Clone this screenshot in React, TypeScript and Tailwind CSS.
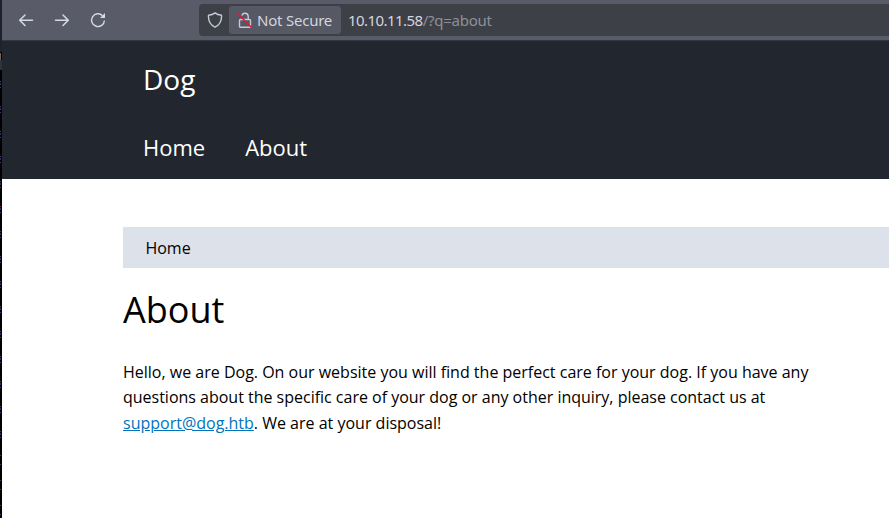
const marks = [82, 107, 132, 157, 182, 207, 232, 257, 282, 307, 332, 357, 382, 407, 432];
const faintMarks = [455, 464, 480, 489, 505, 514];

function TerminalEdge() {
  return (
    <svg width="2" height="518" className="block shrink-0 bg-black" shapeRendering="crispEdges">
      <rect width="2" height="52" fill="#20222b" />
      <rect y="53" width="1" height="7" fill="#756050" />
      <rect y="60" width="2" height="10" fill="#30323f" />
      {marks.map((y) => (
        <g key={y}>
          <rect y={y - 1} width="1" height="1" fill="#693347" />
          <rect y={y + 1} width="1" height="2" fill="#203775" />
          <rect y={y + 5} width="1" height="1" fill="#51366c" />
        </g>
      ))}
      {faintMarks.map((y) => (
        <rect key={y} y={y} width="1" height="1" fill="#51366c" />
      ))}
    </svg>
  );
}

function Toolbar() {
  return (
    <div className="flex h-10 items-center bg-[#5a5b68] pl-4 font-['Noto_Sans',sans-serif] text-[15px] text-[#d3d5de]">
      <div className="flex gap-5">
        <svg width="16" height="16" viewBox="0 0 16 16" fill="none" stroke="#d3dae3" strokeWidth="1.5" strokeLinecap="round" strokeLinejoin="round">
          <path d="M14.5 8.3H1.7M7 3L1.7 8.3L7 13.5" />
        </svg>
        <svg width="16" height="16" viewBox="0 0 16 16" fill="none" stroke="#d3dae3" strokeWidth="1.5" strokeLinecap="round" strokeLinejoin="round">
          <path d="M1.5 8.3H14.3M9 3L14.3 8.3L9 13.5" />
        </svg>
        <svg width="16" height="16" viewBox="0 0 16 16" fill="none" stroke="#d3dae3" strokeWidth="1.4">
          <path d="M12.6 3.7A6.4 6.4 0 1 0 14.4 8.5" />
          <path d="M15 1V6H10Z" fill="#d3dae3" stroke="none" />
        </svg>
      </div>
      <div className="ml-[93px] flex h-8 flex-1 items-center rounded-l bg-[#3e4047] pl-2">
        <svg width="16" height="16" viewBox="0 0 16 16" fill="none" stroke="#c4cad4" strokeWidth="1.4" strokeLinejoin="round">
          <path d="M8 .9C6.3 2.3 4 3 1.5 3.2C1.1 8.5 3 12.8 8 15.2C13 12.8 14.9 8.5 14.5 3.2C12 3 9.7 2.3 8 .9Z" />
        </svg>
        <div className="ml-[6px] flex h-7 w-[112px] items-center rounded-[3px] bg-[#565863] pl-2">
          <svg width="16" height="16" viewBox="0 0 16 16" fill="none" stroke="#c4cad4" strokeWidth="1.4">
            <rect x="2.5" y="7.5" width="11" height="7.8" rx="1" />
            <path d="M4.9 3.7A3.2 3.2 0 0 1 11.2 4.2V7.5" />
            <path d="M1.2 2.2L14.4 15.2" stroke="#f0103c" strokeWidth="1.5" />
          </svg>
          <span className="ml-1 whitespace-nowrap tracking-[-0.22px]">Not Secure</span>
        </div>
        <span className="ml-[7px] whitespace-nowrap">
          <span className="tracking-[-0.55px]">10.10.11.58</span>
          <span className="tracking-[-0.25px] text-[#8e9098]">/?q=about</span>
        </span>
      </div>
    </div>
  );
}

export default function App() {
  return (
    <div className="flex h-[518px] w-[889px] overflow-hidden bg-white">
      <TerminalEdge />
      <div className="min-w-0 flex-1">
        <Toolbar />
        <div className="font-['Open_Sans',sans-serif] text-base text-black">
          <header className="h-[139px] border-t border-[#343640] bg-[#22262f] pl-[141px] text-white">
            <div className="pt-[17px] text-[28px] leading-[42px]">Dog</div>
            <nav className="flex gap-10 pt-[30px] text-[22px] leading-[34px]">
              <a>Home</a>
              <a>About</a>
            </nav>
          </header>
          <main className="pl-[121px] pt-12">
            <div className="h-[41px] bg-[#dde1e9] pl-[22.4px] leading-[43px]">Home</div>
            <h1 className="mt-[17px] text-[36px] leading-[50px]">About</h1>
            <p className="mt-[24.6px] leading-[25.6px]">
              Hello, we are Dog. On our website you will find the perfect care for your dog. If you have any
              <br />
              <span className="tracking-[-0.01px]">questions about the specific care of your dog or any other inquiry, please contact us at</span>
              <br />
              <a className="text-[#0074bd] underline">support@dog.htb</a>. We are at your disposal!
            </p>
          </main>
        </div>
      </div>
    </div>
  );
}
